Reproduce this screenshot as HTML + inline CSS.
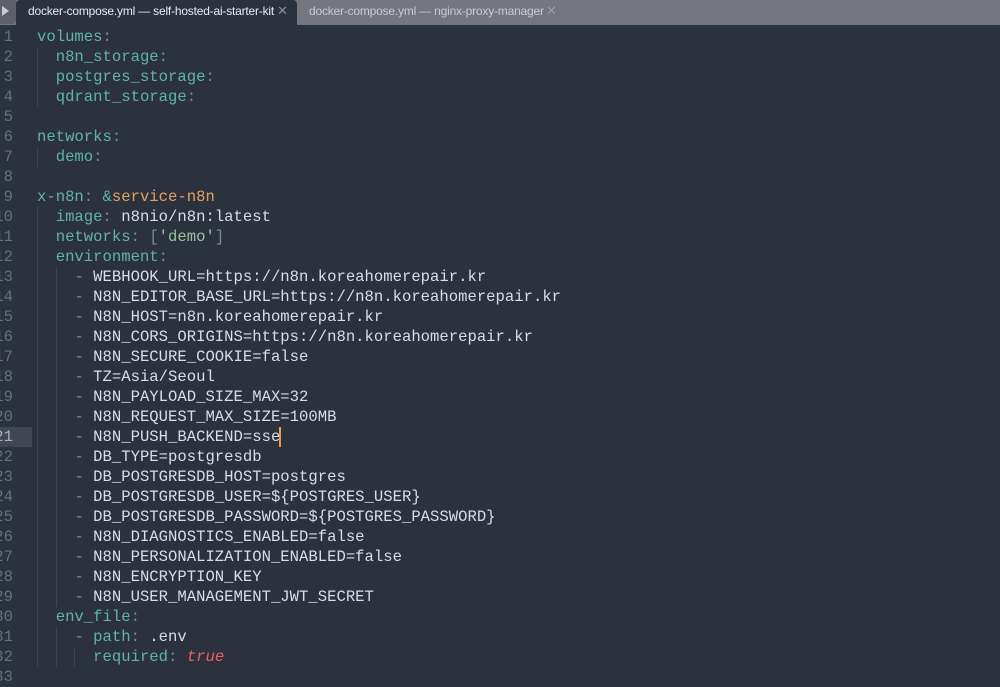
<!DOCTYPE html>
<html><head><meta charset="utf-8"><style>
html,body{margin:0;padding:0;width:1000px;height:681px;overflow:hidden;background:#2c323d;}
.bar{position:absolute;left:0;top:0;width:1000px;height:25px;background:#74777f;}
.lft{position:absolute;left:0;top:0;width:16px;height:24px;background:#5d6068;border-radius:0 0 4px 0;}
.tab{position:absolute;top:0;height:25px;font:12px "Liberation Sans",sans-serif;line-height:22px;white-space:nowrap;letter-spacing:-0.2px}
.t1{left:16px;width:281px;background:#2c323d;color:#e8ebef;border-radius:4px 4px 0 0}
.t2{left:298px;width:262px;color:#c8cbd0}
.x{position:absolute;top:0;font-size:13px;color:#8b8f96}
.code{position:absolute;left:0;top:27px;width:1000px;font:15.6px "Liberation Mono",monospace;}
.l{height:20px;line-height:20px;white-space:pre;position:relative;color:#d8dee9;width:1000px}
.n{position:absolute;left:-27px;top:0;color:#67707c;text-align:right;width:40px}
.c{position:absolute;left:37px;top:0}
.k{color:#5fb3a9}.g{color:#7f8896}.s{color:#99c1a0}.o{color:#e2a15f}.r{color:#ec5f67;font-style:italic}
.hl{position:absolute;left:0;top:0;width:32px;height:20px;background:#404752}
.guide{position:absolute;width:1px;background:#3e4450}
.cur{position:absolute;left:279px;top:427px;width:2px;height:20px;background:#e0a050}
</style></head><body>
<div class="bar"></div>
<div class="lft"><span style="position:absolute;left:2px;top:6px;width:0;height:0;border-left:7px solid #c8cbd0;border-top:5px solid transparent;border-bottom:5px solid transparent"></span></div>
<div class="tab t1"><span style="position:absolute;left:12px">docker-compose.yml — self-hosted-ai-starter-kit</span><span class="x" style="left:261px">✕</span></div>
<div class="tab t2"><span style="position:absolute;left:11px">docker-compose.yml — nginx-proxy-manager</span><span class="x" style="left:248px;color:#9a9da3">✕</span></div>
<div class="guide" style="left:37px;top:47px;height:60px"></div>
<div class="guide" style="left:37px;top:147px;height:20px"></div>
<div class="guide" style="left:37px;top:207px;height:460px"></div>
<div class="guide" style="left:56px;top:267px;height:340px"></div>
<div class="guide" style="left:56px;top:627px;height:40px"></div>
<div class="guide" style="left:74px;top:647px;height:20px"></div>
<div class="code">
<div class="l"><span class="n">1</span><span class="c"><span class="k">volumes</span><span class="g">:</span></span></div>
<div class="l"><span class="n">2</span><span class="c">  <span class="k">n8n_storage</span><span class="g">:</span></span></div>
<div class="l"><span class="n">3</span><span class="c">  <span class="k">postgres_storage</span><span class="g">:</span></span></div>
<div class="l"><span class="n">4</span><span class="c">  <span class="k">qdrant_storage</span><span class="g">:</span></span></div>
<div class="l"><span class="n">5</span></div>
<div class="l"><span class="n">6</span><span class="c"><span class="k">networks</span><span class="g">:</span></span></div>
<div class="l"><span class="n">7</span><span class="c">  <span class="k">demo</span><span class="g">:</span></span></div>
<div class="l"><span class="n">8</span></div>
<div class="l"><span class="n">9</span><span class="c"><span class="k">x-n8n</span><span class="g">:</span> <span class="k">&amp;</span><span class="o">service-n8n</span></span></div>
<div class="l"><span class="n">10</span><span class="c">  <span class="k">image</span><span class="g">:</span> n8nio/n8n:latest</span></div>
<div class="l"><span class="n">11</span><span class="c">  <span class="k">networks</span><span class="g">:</span> <span class="g">[</span><span class="s">'demo'</span><span class="g">]</span></span></div>
<div class="l"><span class="n">12</span><span class="c">  <span class="k">environment</span><span class="g">:</span></span></div>
<div class="l"><span class="n">13</span><span class="c">    <span class="g">-</span> WEBHOOK_URL=https://n8n.koreahomerepair.kr</span></div>
<div class="l"><span class="n">14</span><span class="c">    <span class="g">-</span> N8N_EDITOR_BASE_URL=https://n8n.koreahomerepair.kr</span></div>
<div class="l"><span class="n">15</span><span class="c">    <span class="g">-</span> N8N_HOST=n8n.koreahomerepair.kr</span></div>
<div class="l"><span class="n">16</span><span class="c">    <span class="g">-</span> N8N_CORS_ORIGINS=https://n8n.koreahomerepair.kr</span></div>
<div class="l"><span class="n">17</span><span class="c">    <span class="g">-</span> N8N_SECURE_COOKIE=false</span></div>
<div class="l"><span class="n">18</span><span class="c">    <span class="g">-</span> TZ=Asia/Seoul</span></div>
<div class="l"><span class="n">19</span><span class="c">    <span class="g">-</span> N8N_PAYLOAD_SIZE_MAX=32</span></div>
<div class="l"><span class="n">20</span><span class="c">    <span class="g">-</span> N8N_REQUEST_MAX_SIZE=100MB</span></div>
<div class="l"><span class="hl"></span><span class="n" style="color:#aab1bb">21</span><span class="c">    <span class="g">-</span> N8N_PUSH_BACKEND=sse</span></div>
<div class="l"><span class="n">22</span><span class="c">    <span class="g">-</span> DB_TYPE=postgresdb</span></div>
<div class="l"><span class="n">23</span><span class="c">    <span class="g">-</span> DB_POSTGRESDB_HOST=postgres</span></div>
<div class="l"><span class="n">24</span><span class="c">    <span class="g">-</span> DB_POSTGRESDB_USER=${POSTGRES_USER}</span></div>
<div class="l"><span class="n">25</span><span class="c">    <span class="g">-</span> DB_POSTGRESDB_PASSWORD=${POSTGRES_PASSWORD}</span></div>
<div class="l"><span class="n">26</span><span class="c">    <span class="g">-</span> N8N_DIAGNOSTICS_ENABLED=false</span></div>
<div class="l"><span class="n">27</span><span class="c">    <span class="g">-</span> N8N_PERSONALIZATION_ENABLED=false</span></div>
<div class="l"><span class="n">28</span><span class="c">    <span class="g">-</span> N8N_ENCRYPTION_KEY</span></div>
<div class="l"><span class="n">29</span><span class="c">    <span class="g">-</span> N8N_USER_MANAGEMENT_JWT_SECRET</span></div>
<div class="l"><span class="n">30</span><span class="c">  <span class="k">env_file</span><span class="g">:</span></span></div>
<div class="l"><span class="n">31</span><span class="c">    <span class="g">-</span> <span class="k">path</span><span class="g">:</span> .env</span></div>
<div class="l"><span class="n">32</span><span class="c">      <span class="k">required</span><span class="g">:</span> <span class="r">true</span></span></div>
<div class="l"><span class="n">33</span></div>
</div>
<div class="cur"></div>
</body></html>
